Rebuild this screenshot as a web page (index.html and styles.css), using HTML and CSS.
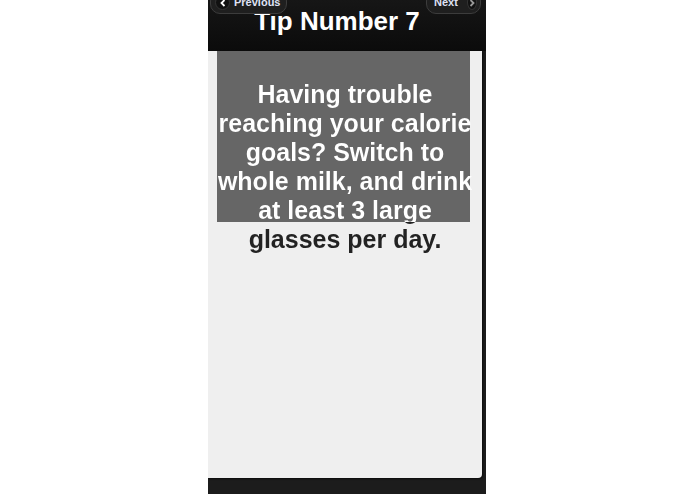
FILE: index.html
```html
<!DOCTYPE html>
<html lang="en">
<head>
  <meta charset="UTF-8">
  <meta name="viewport" content="width=device-width, initial-scale=1.0">
  <title>Tip Number 7</title>
  <link rel="stylesheet" href="styles.css">
</head>
<body>
  <div class="phone">
    <div class="header">
      <h1 class="title">Tip Number 7</h1>
      <a class="nav-btn prev" href="#">
        <span class="arrow">
          <svg width="8" height="8" viewBox="0 0 8 8"><path d="M5.5 1 L2.5 4 L5.5 7" fill="none" stroke="#fff" stroke-width="1.8"/></svg>
        </span>
        Previous
      </a>
      <a class="nav-btn next" href="#">
        Next
        <span class="arrow">
          <svg width="8" height="8" viewBox="0 0 8 8"><path d="M2.5 1 L5.5 4 L2.5 7" fill="none" stroke="#999" stroke-width="1.8"/></svg>
        </span>
      </a>
    </div>
    <div class="content">
      <p class="tip">Having trouble reaching your calorie goals? Switch to whole milk, and drink at least 3 large glasses per day.</p>
    </div>
    <div class="footer"></div>
  </div>
</body>
</html>
```

FILE: styles.css
```css
body {
  margin: 0;
  padding: 0;
  background: #fff;
  font-family: "Liberation Sans", Arial, sans-serif;
}
.phone {
  width: 278px;
  height: 494px;
  margin-left: 208px;
  display: flex;
  flex-direction: column;
  background: #1c1c1c;
  overflow: hidden;
}
.header {
  position: relative;
  height: 51px;
  background: linear-gradient(#161616, #0b0b0b);
  padding-right: 20px;
}
.title {
  margin: 0;
  padding-top: 8px;
  font-size: 26px;
  line-height: 26px;
  font-weight: bold;
  color: #fff;
  text-align: center;
}
.nav-btn {
  position: absolute;
  top: -9px;
  height: 23px;
  display: flex;
  align-items: flex-end;
  gap: 4px;
  padding: 0 4px 5px 4px;
  box-sizing: border-box;
  background: #1f1f1f;
  border: 1px solid #3c3c3c;
  border-radius: 10px;
  color: #dfe2f5;
  font-size: 11px;
  font-weight: bold;
  line-height: 11px;
  text-decoration: none;
}
.prev {
  left: 2px;
  width: 77px;
}
.next {
  left: 218px;
  width: 55px;
  padding-left: 7px;
  gap: 9px;
}
.arrow {
  width: 13px;
  height: 13px;
  border-radius: 50%;
  background: #111;
  border: 1px solid #333;
  display: flex;
  align-items: center;
  justify-content: center;
  margin-bottom: -2px;
}
.content {
  position: relative;
  height: 427px;
  margin-right: 4px;
  padding: 29px 8px 0 8px;
  box-sizing: border-box;
  background: #efefef;
  border-radius: 0 0 4px 0;
  box-shadow: 1px 1px 2px rgba(0, 0, 0, 0.6);
}
.content::before {
  content: "";
  position: absolute;
  top: 0;
  left: 9px;
  width: 253px;
  height: 171px;
  background: #666;
}
.tip {
  position: relative;
  margin: 0;
  font-size: 25px;
  line-height: 29px;
  font-weight: bold;
  text-align: center;
  color: transparent;
  background: linear-gradient(#fff 0, #fff 142px, #222 142px);
  -webkit-background-clip: text;
  background-clip: text;
}
.footer {
  flex: 1;
  background: #1c1c1c;
}
```
